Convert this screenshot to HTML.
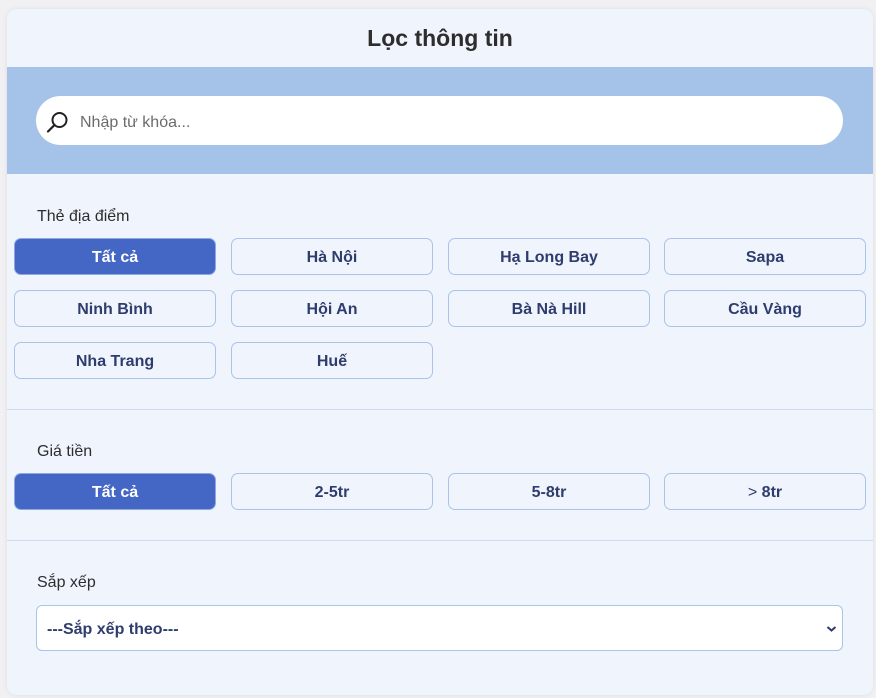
<!DOCTYPE html>
<html><head><meta charset="utf-8"><style>
*{box-sizing:border-box;margin:0;padding:0}
body{width:876px;height:698px;background:#f1f1f3;font-family:"Liberation Sans","Noto Sans CJK SC",sans-serif;position:relative;overflow:hidden}
.card{position:absolute;left:7px;top:9px;width:866px;height:686px;background:#f0f4fc;border-radius:10px;overflow:hidden;box-shadow:0 0 6px rgba(0,0,0,.08)}
.title{position:absolute;top:0;left:0;width:100%;height:58px;text-align:center;line-height:58px;font-size:23px;font-weight:bold;color:#2d2d2d}
.band{position:absolute;top:58px;left:0;width:100%;height:107px;background:#a5c3e8}
.search{position:absolute;left:29px;top:29px;width:807px;height:49px;background:#fff;border-radius:25px}
.search svg{position:absolute;left:10px;top:14px}
.search span{position:absolute;left:44px;top:18px;font-size:16px;color:#6b6b6b}
.lbl{position:absolute;left:30px;font-size:16px;color:#2d2d2d}
.btn{position:absolute;width:202px;height:37px;border:1px solid #a9c4ea;border-radius:7px;text-align:center;line-height:37px;font-size:16px;font-weight:bold;color:#2e3d6e}
.btn.on{background:#4466c5;color:#fff;border-color:#8fa8e0}
.hr{position:absolute;left:0;width:100%;height:1px;background:#cfdcf0}
.sel{position:absolute;left:29px;top:596px;width:807px;height:46px;background:#fff;border:1px solid #a9c4ea;border-radius:6px}
.sel span{position:absolute;left:10px;top:15px;font-size:16px;font-weight:bold;color:#2e3d6e}
.sel svg{position:absolute;right:5px;top:19px}
</style></head><body>
<div class="card">
<div class="title">Lọc thông tin</div>
<div class="band"><div class="search">
<svg width="24" height="24" viewBox="0 0 24 24"><circle cx="13.5" cy="10" r="7" fill="none" stroke="#222" stroke-width="2"/><line x1="8.5" y1="15" x2="2" y2="21.5" stroke="#222" stroke-width="2.2" stroke-linecap="round"/></svg>
<span>Nhập từ khóa...</span></div></div>
<div class="lbl" style="top:199px">Thẻ địa điểm</div>
<div class="btn on" style="left:7px;top:229px">Tất cả</div>
<div class="btn" style="left:224px;top:229px">Hà Nội</div>
<div class="btn" style="left:441px;top:229px">Hạ Long Bay</div>
<div class="btn" style="left:657px;top:229px">Sapa</div>
<div class="btn" style="left:7px;top:281px">Ninh Bình</div>
<div class="btn" style="left:224px;top:281px">Hội An</div>
<div class="btn" style="left:441px;top:281px">Bà Nà Hill</div>
<div class="btn" style="left:657px;top:281px">Cầu Vàng</div>
<div class="btn" style="left:7px;top:333px">Nha Trang</div>
<div class="btn" style="left:224px;top:333px">Huế</div>
<div class="hr" style="top:400px"></div>
<div class="lbl" style="top:434px">Giá tiền</div>
<div class="btn on" style="left:7px;top:464px">Tất cả</div>
<div class="btn" style="left:224px;top:464px">2-5tr</div>
<div class="btn" style="left:441px;top:464px">5-8tr</div>
<div class="btn" style="left:657px;top:464px"><span style="font-weight:normal">&gt;</span> 8tr</div>
<div class="hr" style="top:531px"></div>
<div class="lbl" style="top:565px">Sắp xếp</div>
<div class="sel"><span>---Sắp xếp theo---</span>
<svg width="11" height="8" viewBox="0 0 11 8"><path d="M1.5 2l4 3.5L9.5 2" fill="none" stroke="#2e3d6e" stroke-width="2"/></svg></div>
</div>
</body></html>
